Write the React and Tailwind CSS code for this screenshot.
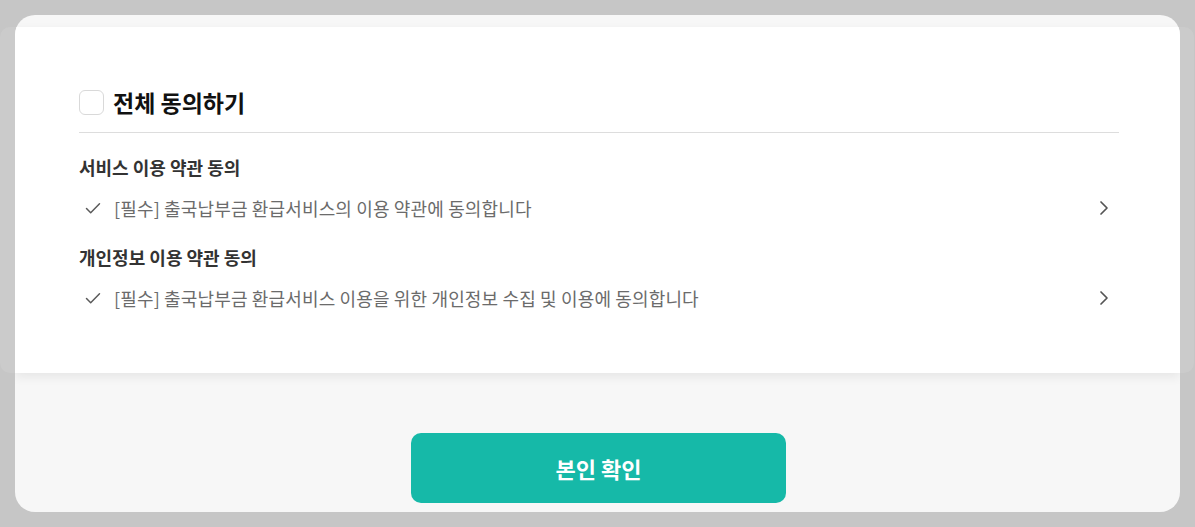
const font = { fontFamily: '"Noto Sans CJK KR", "Noto Sans", sans-serif' }

function CheckIcon() {
  return (
    <svg width="16" height="16" viewBox="0 0 16 16" fill="none" className="shrink-0">
      <path d="M1.5 8.5l4.2 4.2L14.5 3.8" stroke="#5a5a5a" strokeWidth="1.5" strokeLinecap="round" strokeLinejoin="round" />
    </svg>
  )
}

function ChevronRight() {
  return (
    <svg width="12" height="16" viewBox="0 0 12 16" fill="none" className="shrink-0">
      <path d="M3 2l6 6-6 6" stroke="#555" strokeWidth="1.7" strokeLinecap="round" strokeLinejoin="round" />
    </svg>
  )
}

function TermRow({ title, text }) {
  return (
    <div>
      <h3 className="text-[18px] leading-[24px] font-bold text-[#333]">{title}</h3>
      <div className="mt-[17px] flex items-center justify-between pl-[6px] pr-[9px]">
        <div className="flex items-center gap-[13px]">
          <CheckIcon />
          <span className="text-[18px] leading-[24px] tracking-[0.15px] text-[#6b6b6b]">{text}</span>
        </div>
        <ChevronRight />
      </div>
    </div>
  )
}

export default function App() {
  return (
    <div className="relative h-[527px] w-full overflow-hidden bg-[#c6c6c6] px-[15px] pt-[15px]" style={font}>
      {/* dimmed sheet behind the modal */}
      <div className="absolute left-0 top-[27px] h-[346px] w-[1194px] rounded-[10px] bg-[#cbcbcb]" />

      <div className="relative z-10 w-[1165px] overflow-hidden rounded-[20px] bg-[#f7f7f7] pt-[12px]">
        <section className="bg-white pl-[64px] pr-[61px] pt-[60px] pb-[63px] shadow-[0_4px_10px_rgba(0,0,0,0.07)]">
          <div className="flex items-center gap-[9px] border-b border-[#dddddd] pb-[15px]">
            <span className="h-[25px] w-[25px] rounded-[6px] border border-[#d9d9d9] bg-white" />
            <h2 className="text-[23px] leading-[30px] font-bold text-[#111]">전체 동의하기</h2>
          </div>

          <div className="mt-[22px] space-y-[25px]">
            <TermRow
              title="서비스 이용 약관 동의"
              text="[필수] 출국납부금 환급서비스의 이용 약관에 동의합니다"
            />
            <TermRow
              title="개인정보 이용 약관 동의"
              text="[필수] 출국납부금 환급서비스 이용을 위한 개인정보 수집 및 이용에 동의합니다"
            />
          </div>
        </section>

        <div className="flex justify-center pt-[60px] pb-[9px] pl-[2px]">
          <button className="h-[70px] w-[375px] rounded-[10px] bg-[#16b9a8] text-[22px] font-bold text-white">
            본인 확인
          </button>
        </div>
      </div>
    </div>
  )
}
